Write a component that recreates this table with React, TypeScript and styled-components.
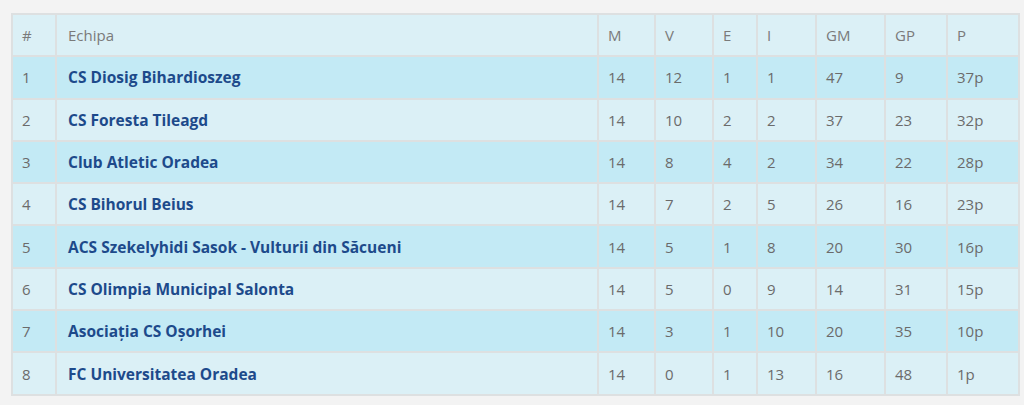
import * as React from 'react';
import styled, { createGlobalStyle } from 'styled-components';

const GlobalStyle = createGlobalStyle`
  html, body {
    margin: 0;
    padding: 0;
    background: #f3f3f3;
  }
  body {
    font-family: "Open Sans", "Liberation Sans", sans-serif;
  }
`;

const COLUMNS = '44px 542px 57px 58px 44px 59px 69px 62px 72px';

const StyledPage = styled.div`
  padding: 13px 0 0 11px;
  height: 405px;
  box-sizing: border-box;
`;

const StyledTable = styled.div`
  width: 1009px;
  border-right: 2px solid #dde0e1;
  border-bottom: 2px solid #dde0e1;
  box-sizing: border-box;
`;

const StyledRow = styled.div<{ $highlight?: boolean }>`
  display: grid;
  grid-template-columns: ${COLUMNS};
  height: 42.3px;
  background: ${p => (p.$highlight ? '#c3eaf5' : '#dbf0f6')};
`;

const StyledCell = styled.div<{ $head?: boolean; $wide?: boolean }>`
  display: flex;
  align-items: center;
  padding: 0 0 0 ${p => (p.$wide ? '11px' : '9px')};
  border-left: 2px solid #dde0e1;
  border-top: 2px solid #dde0e1;
  box-sizing: border-box;
  font-size: 15px;
  color: ${p => (p.$head ? '#7a7a7a' : '#6b6b6b')};
  white-space: nowrap;
  overflow: hidden;
`;

const StyledTeam = styled(StyledCell)`
  font-size: 15.5px;
  font-weight: 700;
  color: #1d4a8b;
`;

const headers = ['#', 'Echipa', 'M', 'V', 'E', 'I', 'GM', 'GP', 'P'];

const rows: [string, string, number, number, number, number, number, number, string][] = [
  ['1', 'CS Diosig Bihardioszeg', 14, 12, 1, 1, 47, 9, '37p'],
  ['2', 'CS Foresta Tileagd', 14, 10, 2, 2, 37, 23, '32p'],
  ['3', 'Club Atletic Oradea', 14, 8, 4, 2, 34, 22, '28p'],
  ['4', 'CS Bihorul Beius', 14, 7, 2, 5, 26, 16, '23p'],
  ['5', 'ACS Szekelyhidi Sasok - Vulturii din Săcueni', 14, 5, 1, 8, 20, 30, '16p'],
  ['6', 'CS Olimpia Municipal Salonta', 14, 5, 0, 9, 14, 31, '15p'],
  ['7', 'Asociația CS Oșorhei', 14, 3, 1, 10, 20, 35, '10p'],
  ['8', 'FC Universitatea Oradea', 14, 0, 1, 13, 16, 48, '1p'],
];

export default function App() {
  return (
    <StyledPage>
      <GlobalStyle />
      <StyledTable>
        <StyledRow>
          {headers.map((h, i) => (
            <StyledCell $head $wide={i === 1} key={h}>{h}</StyledCell>
          ))}
        </StyledRow>
        {rows.map((r, i) => (
          <StyledRow $highlight={i % 2 === 0} key={r[0]}>
            <StyledCell>{r[0]}</StyledCell>
            <StyledTeam $wide>{r[1]}</StyledTeam>
            {r.slice(2).map((v, j) => (
              <StyledCell key={j}>{v}</StyledCell>
            ))}
          </StyledRow>
        ))}
      </StyledTable>
    </StyledPage>
  );
}
